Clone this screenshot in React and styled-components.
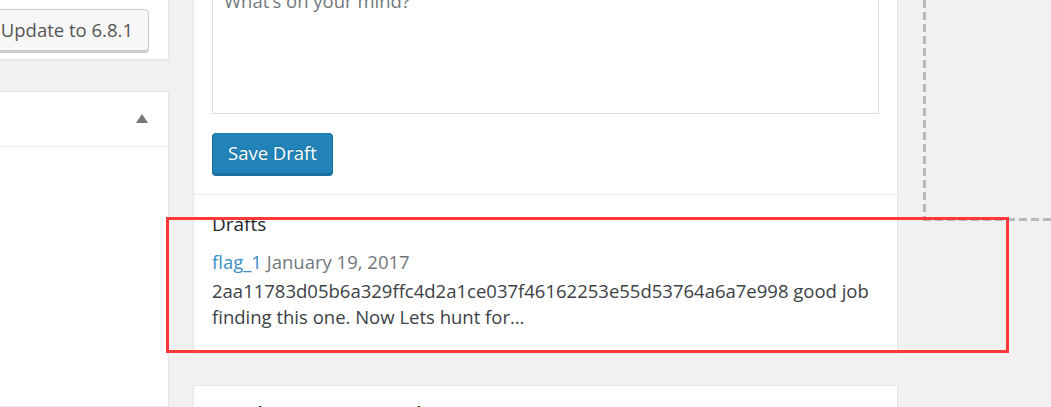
import styled, { createGlobalStyle } from "styled-components";

const GlobalStyle = createGlobalStyle`
  html, body {
    margin: 0;
    padding: 0;
    background: #f1f1f1;
    font-family: "Open Sans", "Noto Sans", sans-serif;
    font-size: 18.5px;
    color: #444;
  }
`;

const Page = styled.div`
  position: relative;
  display: flex;
  height: 407px;
  overflow: hidden;
`;

const LeftCol = styled.div`
  width: 169px;
  flex-shrink: 0;
  display: flex;
  flex-direction: column;
  gap: 31px;
`;

const Panel = styled.div`
  background: #fff;
  border: 1px solid #e5e5e5;
  box-shadow: 0 1px 1px rgba(0, 0, 0, 0.04);
  border-left: ${(p) => (p.$cutLeft ? "none" : "1px solid #e5e5e5")};
  border-top: ${(p) => (p.$cutTop ? "none" : "1px solid #e5e5e5")};
`;

const UpdatePanel = styled(Panel)`
  height: 60px;
  display: flex;
  justify-content: flex-end;
  align-items: flex-start;
  padding: 9px 19px 0 0;
  box-sizing: border-box;
`;

const Button = styled.button`
  font-family: inherit;
  font-size: 18.5px;
  height: 42px;
  padding: 0 15px 2px;
  border-radius: 4px;
  cursor: pointer;
  white-space: nowrap;
`;

const SecondaryButton = styled(Button)`
  background: #f7f7f7;
  border: 1px solid #ccc;
  color: #555;
  box-shadow: 0 2px 0 #ccc;
`;

const PrimaryButton = styled(Button)`
  background: #2183b8;
  border: 1px solid;
  border-color: #1f78a8 #1a6e9b #1a6e9b;
  color: #fff;
  box-shadow: 0 2px 0 #1a6e9b;
  height: 41px;
  text-shadow: 0 -1px 1px #1a6e9b;
`;

const SidePanel = styled(Panel)`
  flex: 1;
`;

const SideHeader = styled.div`
  height: 54px;
  border-bottom: 1px solid #eee;
  display: flex;
  justify-content: flex-end;
  align-items: center;
  padding-right: 20px;
`;

const Arrow = styled.span`
  width: 0;
  height: 0;
  border-left: 6px solid transparent;
  border-right: 6px solid transparent;
  border-bottom: 9px solid #72777c;
  margin-top: -2px;
`;

const MidCol = styled.div`
  width: 705px;
  margin-left: 24px;
  flex-shrink: 0;
  display: flex;
  flex-direction: column;
  gap: 32px;
`;

const QuickPress = styled(Panel)``;

const Form = styled.div`
  padding: 0 18px 20px;
  border-bottom: 1px solid #eee;
`;

const TextArea = styled.div`
  margin-top: -21px;
  height: 135px;
  box-sizing: border-box;
  border: 1px solid #ddd;
  padding: 8px 11px;
  color: #72777c;
  line-height: 26px;
  box-shadow: inset 0 1px 2px rgba(0, 0, 0, 0.05);
  margin-bottom: 19px;
`;

const Drafts = styled.div`
  padding: 16px 18px 22px;
  line-height: 26px;
`;

const DraftsTitle = styled.h2`
  margin: 0 0 12px;
  font-size: 19px;
  font-weight: 400;
  line-height: 26px;
  color: #23282d;
`;

const DraftMeta = styled.div`
  margin-bottom: 3px;
`;

const DraftLink = styled.a`
  color: #3b8fc6;
  text-decoration: none;
`;

const DraftDate = styled.span`
  color: #72777c;
`;

const DraftText = styled.p`
  margin: 0;
  color: #3c4146;
`;

const NewsPanel = styled(Panel)`
  flex: 1;
  padding: 14px 18px;
`;

const NewsTitle = styled.h2`
  margin: 0;
  font-size: 19.5px;
  font-weight: 600;
  color: #23282d;
  line-height: 28px;
`;

const RightCol = styled.div`
  margin-left: 25px;
  flex: 1;
`;

const DropZone = styled.div`
  height: 221px;
  margin-right: -10px;
  background:
    repeating-linear-gradient(to bottom, #b4b9be 0 8px, transparent 8px 12px)
      left top / 3px 100% no-repeat,
    repeating-linear-gradient(to right, #b4b9be 0 8px, transparent 8px 12px)
      left bottom / 100% 3px no-repeat;
`;

const Highlight = styled.div`
  position: absolute;
  left: 166px;
  top: 217px;
  width: 843px;
  height: 136px;
  box-sizing: border-box;
  border: 3px solid #ff3838;
  pointer-events: none;
`;

export default function App() {
  return (
    <>
      <GlobalStyle />
      <Page>
        <LeftCol>
          <UpdatePanel $cutLeft $cutTop>
            <SecondaryButton>Update to 6.8.1</SecondaryButton>
          </UpdatePanel>
          <SidePanel $cutLeft>
            <SideHeader>
              <Arrow />
            </SideHeader>
          </SidePanel>
        </LeftCol>
        <MidCol>
          <QuickPress $cutTop>
            <Form>
              <TextArea>What’s on your mind?</TextArea>
              <PrimaryButton>Save Draft</PrimaryButton>
            </Form>
            <Drafts>
              <DraftsTitle>Drafts</DraftsTitle>
              <DraftMeta>
                <DraftLink href="#">flag_1</DraftLink>{" "}
                <DraftDate>January 19, 2017</DraftDate>
              </DraftMeta>
              <DraftText>
                2aa11783d05b6a329ffc4d2a1ce037f46162253e55d53764a6a7e998 good job
                finding this one. Now Lets hunt for…
              </DraftText>
            </Drafts>
          </QuickPress>
          <NewsPanel>
            <NewsTitle>WordPress Events and News</NewsTitle>
          </NewsPanel>
        </MidCol>
        <RightCol>
          <DropZone />
        </RightCol>
        <Highlight />
      </Page>
    </>
  );
}
